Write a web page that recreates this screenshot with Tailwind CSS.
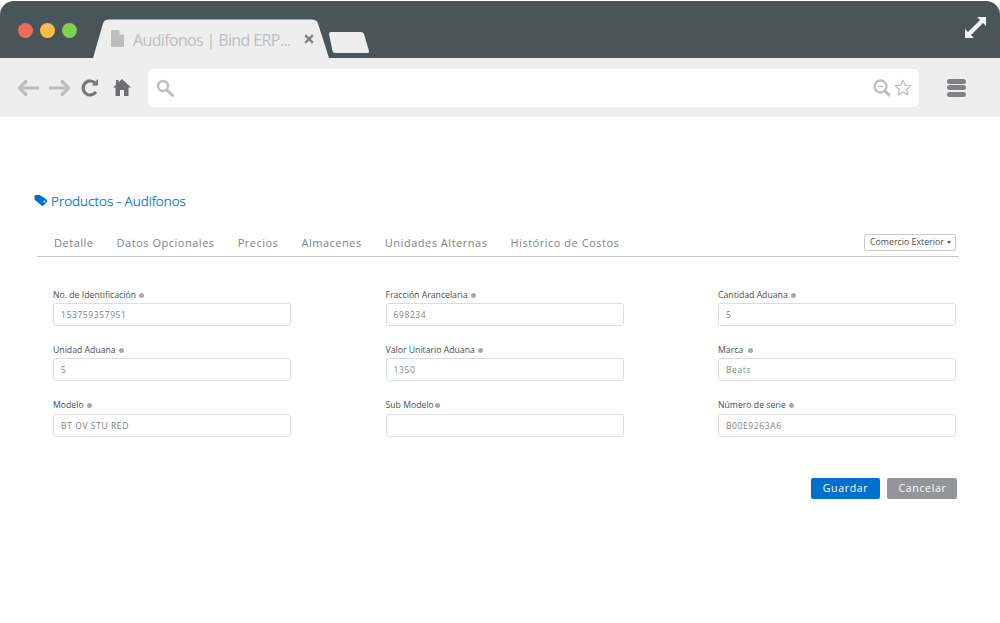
<!DOCTYPE html>
<html lang="es">
<head>
  <meta charset="UTF-8" />
  <title>Productos - Audifonos</title>
  <script src="https://cdn.jsdelivr.net/npm/@tailwindcss/browser@4"></script>
</head>
<body class="bg-white w-[1000px] h-[623px] overflow-hidden font-['Open_Sans',sans-serif]">
  <!-- browser chrome -->
  <div class="pt-px bg-white">
    <div class="h-[57px] bg-[#4a5559] rounded-t-[14px] flex items-end relative">
      <div class="flex gap-[7px] absolute left-[18px] top-[22px]">
        <span class="w-[15px] h-[15px] rounded-full bg-[#ec6b5b]"></span>
        <span class="w-[15px] h-[15px] rounded-full bg-[#fdbb4c]"></span>
        <span class="w-[15px] h-[15px] rounded-full bg-[#7dd24f]"></span>
      </div>
      <div class="relative ml-[93px] w-[236px] h-[39px]">
        <svg class="absolute inset-0" width="236" height="39" viewBox="0 0 236 39"><path d="M0 39 L10 4.500 Q11 0.500 16 0.500 L218 0.500 Q224 0.500 225 4.500 L236 39 Z" fill="#eeeeee"/></svg>
        <div class="relative flex items-center h-full pl-[18px]">
          <svg width="13" height="17" viewBox="0 0 13 17"><path d="M0 0H8L13 5V17H0Z" fill="#bcbec0"/><path d="M8.600 0 13 4.400H8.600Z" fill="#eeeeee"/></svg>
          <span class="ml-[9px] w-[158px] pt-[2px] text-[16px] tracking-[-0.64px] leading-none text-[#bcbec0] whitespace-nowrap">Audifonos | Bind ERP...</span>
          <svg class="ml-[13px]" width="10" height="10" viewBox="0 0 10 10"><path d="M1.200 1.200 8.800 8.800M8.800 1.200 1.200 8.800" stroke="#808285" stroke-width="2.400"/></svg>
        </div>
      </div>
      <svg class="absolute left-[328px] top-[30px]" width="42" height="23" viewBox="0 0 42 23"><path d="M1 3 Q1 1 3 1 L33 1 Q35 1 36 3 L41 20 Q41.500 22 39 22 L7 22 Q5 22 4.500 20 Z" fill="#eeeeee"/></svg>
      <svg class="absolute left-[965px] top-[16px]" width="21" height="21" viewBox="0 0 21 21"><path d="M12 0H21V9L18 6 6 18 9 21H0V12L3 15 15 3Z" fill="#f1f2f2"/></svg>
    </div>
    <div class="h-[59px] bg-[#eeeeee] flex items-center relative">
      <svg class="ml-[17px]" width="22" height="16" viewBox="0 0 22 16"><path d="M9 1.500 2.500 8 9 14.500M3 8H21" fill="none" stroke="#bcbec0" stroke-width="3.200" stroke-linecap="round" stroke-linejoin="round"/></svg>
      <svg class="ml-[10px]" width="22" height="16" viewBox="0 0 22 16"><path d="M13 1.500 19.500 8 13 14.500M19 8H1" fill="none" stroke="#bcbec0" stroke-width="3.200" stroke-linecap="round" stroke-linejoin="round"/></svg>
      <svg class="ml-[10px]" width="18" height="18" viewBox="0 0 18 18"><path d="M15 12.800A7 7 0 1 1 14.600 4.600" fill="none" stroke="#77787b" stroke-width="3.200"/><path d="M10.500 6.500H17V0Z" fill="#77787b"/></svg>
      <svg class="ml-[14px]" width="18" height="17" viewBox="0 0 18 17"><path d="M9 0 18 8.600H15.500V17H11V11H7V17H2.500V8.600H0L3 5.700V1H5.500V3.300Z" fill="#6d6e71"/></svg>
      <div class="ml-[17px] w-[771px] h-[38px] bg-white rounded-[5px] flex items-center pl-[8px] pr-[7px]">
        <svg width="18" height="18" viewBox="0 0 18 18"><circle cx="7" cy="7" r="5" fill="none" stroke="#bcbec0" stroke-width="2.400"/><path d="M10.800 10.800 16.500 16.500" stroke="#bcbec0" stroke-width="3" stroke-linecap="round"/></svg>
        <svg class="ml-auto" width="17" height="18" viewBox="0 0 17 18"><circle cx="7.500" cy="7.500" r="6" fill="none" stroke="#bcbec0" stroke-width="2.400"/><path d="M5 7.500H10" stroke="#bcbec0" stroke-width="1.500"/><path d="M12 12 16 16" stroke="#bcbec0" stroke-width="3" stroke-linecap="round"/></svg>
        <svg class="ml-[4px]" width="18" height="17" viewBox="0 0 18 17"><path d="M9 1.200 11.300 6.200 16.800 6.800 12.700 10.500 13.900 15.900 9 13.100 4.100 15.900 5.300 10.500 1.200 6.800 6.700 6.200Z" fill="none" stroke="#bcbec0" stroke-width="1.300" stroke-linejoin="round"/></svg>
      </div>
      <div class="ml-[28px] w-[19px] flex flex-col gap-[1.500px]">
        <span class="h-[5px] rounded-full bg-[#808285]"></span>
        <span class="h-[5px] rounded-full bg-[#808285]"></span>
        <span class="h-[5px] rounded-full bg-[#808285]"></span>
      </div>
    </div>
  </div>

  <!-- page -->
  <div class="pl-[37px] pr-[41px]">
    <div class="mt-[74px] -ml-[3px] h-[20px] flex items-center text-[#0070cf]">
      <svg width="14" height="12" viewBox="0 0 14 12"><path d="M0.500 1Q0.500 0 1.500 0H5.500L9 2 13 5Q13.700 6 13 7L9.500 10.500Q8.500 11 7.500 10.500L1 5Q0.500 4.500 0.500 4Z" fill="#0070cf"/><circle cx="10.500" cy="6.500" r="0.900" fill="#fff"/></svg>
      <h1 class="ml-[3px] pt-[2px] text-[13.500px] leading-none font-light [-webkit-text-stroke:0.25px_#0070cf] whitespace-nowrap">Productos - Audifonos</h1>
    </div>

    <div class="mt-[20px] h-[26px] border-b border-[#c4c6c8] flex items-start pl-[17px] text-[11px] tracking-[0.52px] leading-[24px] text-[#808285] relative">
      <div class="flex gap-[23px] whitespace-nowrap">
        <span>Detalle</span>
        <span>Datos Opcionales</span>
        <span>Precios</span>
        <span>Almacenes</span>
        <span>Unidades Alternas</span>
        <span>Histórico de Costos</span>
      </div>
      <div class="ml-auto mr-[3px] mt-[3px] h-[17px] w-[92px] bg-white border border-[#c9cbcc] rounded-[2px] flex items-center pl-[5px] text-[8.800px] tracking-normal leading-none text-[#4d4d4f] whitespace-nowrap">
        Comercio Exterior
        <span class="ml-auto mr-[4px] w-0 h-0 border-x-[2.500px] border-x-transparent border-t-[3px] border-t-[#58595b]"></span>
      </div>
    </div>

    <div class="mt-[30px] pl-[16px] grid grid-cols-[238px_238px_238px] gap-x-[94.500px] gap-y-[16.250px]">
      <div>
        <label class="h-[16px] flex items-center text-[8.700px] leading-none text-[#4d4d4f]">No. de Identificación<span class="ml-[3px] w-[5px] h-[5px] rounded-full bg-[#a7a9ac]"></span></label>
        <div class="h-[23px] border-[1.500px] border-[#dcddde] rounded-[3px] flex items-center pl-[7px] pt-[2px] text-[8.500px] tracking-[0.6px] text-[#808285]">153759357951</div>
      </div>
      <div>
        <label class="h-[16px] flex items-center text-[8.700px] leading-none text-[#4d4d4f]">Fracción Arancelaria<span class="ml-[3px] w-[5px] h-[5px] rounded-full bg-[#a7a9ac]"></span></label>
        <div class="h-[23px] border-[1.500px] border-[#dcddde] rounded-[3px] flex items-center pl-[7px] pt-[2px] text-[8.500px] tracking-[0.6px] text-[#808285]">698234</div>
      </div>
      <div>
        <label class="h-[16px] flex items-center text-[8.700px] leading-none text-[#4d4d4f]">Cantidad Aduana<span class="ml-[3px] w-[5px] h-[5px] rounded-full bg-[#a7a9ac]"></span></label>
        <div class="h-[23px] border-[1.500px] border-[#dcddde] rounded-[3px] flex items-center pl-[7px] pt-[2px] text-[8.500px] tracking-[0.6px] text-[#808285]">5</div>
      </div>
      <div>
        <label class="h-[16px] flex items-center text-[8.700px] leading-none text-[#4d4d4f]">Unidad Aduana<span class="ml-[3px] w-[5px] h-[5px] rounded-full bg-[#a7a9ac]"></span></label>
        <div class="h-[23px] border-[1.500px] border-[#dcddde] rounded-[3px] flex items-center pl-[7px] pt-[2px] text-[8.500px] tracking-[0.6px] text-[#808285]">5</div>
      </div>
      <div>
        <label class="h-[16px] flex items-center text-[8.700px] leading-none text-[#4d4d4f]">Valor Unitario Aduana<span class="ml-[3px] w-[5px] h-[5px] rounded-full bg-[#a7a9ac]"></span></label>
        <div class="h-[23px] border-[1.500px] border-[#dcddde] rounded-[3px] flex items-center pl-[7px] pt-[2px] text-[8.500px] tracking-[0.6px] text-[#808285]">1350</div>
      </div>
      <div>
        <label class="h-[16px] flex items-center text-[8.700px] leading-none text-[#4d4d4f]">Marca<span class="ml-[5px] w-[5px] h-[5px] rounded-full bg-[#a7a9ac]"></span></label>
        <div class="h-[23px] border-[1.500px] border-[#dcddde] rounded-[3px] flex items-center pl-[7px] pt-[2px] text-[8.500px] tracking-[0.6px] text-[#808285]">Beats</div>
      </div>
      <div>
        <label class="h-[16px] flex items-center text-[8.700px] leading-none text-[#4d4d4f]">Modelo<span class="ml-[3px] w-[5px] h-[5px] rounded-full bg-[#a7a9ac]"></span></label>
        <div class="h-[23px] border-[1.500px] border-[#dcddde] rounded-[3px] flex items-center pl-[7px] pt-[2px] text-[8.500px] tracking-[0.6px] text-[#808285]">BT OV STU RED</div>
      </div>
      <div>
        <label class="h-[16px] flex items-center text-[8.700px] leading-none text-[#4d4d4f]">Sub Modelo<span class="ml-[1px] w-[5px] h-[5px] rounded-full bg-[#a7a9ac]"></span></label>
        <div class="h-[23px] border-[1.500px] border-[#dcddde] rounded-[3px]"></div>
      </div>
      <div>
        <label class="h-[16px] flex items-center text-[8.700px] leading-none text-[#4d4d4f]">Número de serie<span class="ml-[3px] w-[5px] h-[5px] rounded-full bg-[#a7a9ac]"></span></label>
        <div class="h-[23px] border-[1.500px] border-[#dcddde] rounded-[3px] flex items-center pl-[7px] pt-[2px] text-[8.500px] tracking-[0.6px] text-[#808285]">B00E9263A6</div>
      </div>
    </div>

    <div class="mt-[41px] pr-[2px] flex justify-end gap-[7px] text-[10.500px] tracking-[0.7px] text-white">
      <button class="w-[69px] h-[21px] pt-px bg-[#0070cf] rounded-[2px]">Guardar</button>
      <button class="w-[70px] h-[21px] pt-px pl-px bg-[#939598] rounded-[2px]">Cancelar</button>
    </div>
  </div>
</body>
</html>
